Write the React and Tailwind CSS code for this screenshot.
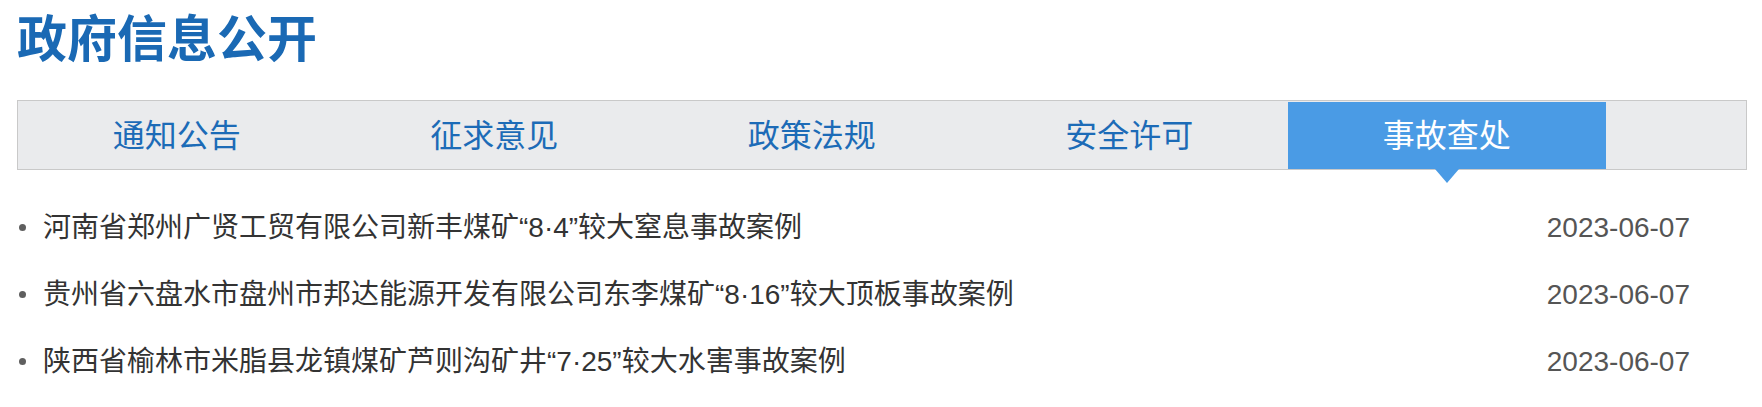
import React, { useState } from "react";

const tabs = ["通知公告", "征求意见", "政策法规", "安全许可", "事故查处"];

const items = [
  { title: "河南省郑州广贤工贸有限公司新丰煤矿“8·4”较大窒息事故案例", date: "2023-06-07" },
  { title: "贵州省六盘水市盘州市邦达能源开发有限公司东李煤矿“8·16”较大顶板事故案例", date: "2023-06-07" },
  { title: "陕西省榆林市米脂县龙镇煤矿芦则沟矿井“7·25”较大水害事故案例", date: "2023-06-07" },
];

const App = () => {
  const [active, setActive] = useState(4);

  return (
    <div
      className="w-full bg-white pl-[17px] pr-[15px] pt-[15px]"
      style={{ fontFamily: '"Liberation Sans", "Noto Sans CJK SC", sans-serif' }}
    >
      <h1 className="h-[50px] text-[50px] leading-[50px] font-bold text-[#1a69b4]">政府信息公开</h1>

      <div className="mt-[35px] h-[70px] border border-[#c9c9c9] bg-[#eaebed] pt-px">
        <div className="flex h-full">
          {tabs.map((t, i) => (
            <div
              key={t}
              onClick={() => setActive(i)}
              className={
                i === active
                  ? "relative flex w-[317.5px] cursor-pointer items-center justify-center bg-[#4a9be5] text-[32px] text-white"
                  : "flex w-[317.5px] cursor-pointer items-center justify-center text-[32px] text-[#1c6bb7]"
              }
            >
              {t}
              {i === active && (
                <span className="absolute left-1/2 top-full -ml-[12px] h-0 w-0 border-x-[12px] border-t-[14px] border-x-transparent border-t-[#4a9be5]" />
              )}
            </div>
          ))}
        </div>
      </div>

      <ul className="pt-[24px] pr-[57px]">
        {items.map((it, i) => (
          <li key={i} className="flex h-[67px] items-center justify-between">
            <div className="flex items-center">
              <span className="ml-[2px] mr-[17px] h-[7px] w-[7px] rounded-full bg-[#5f5f5f]" />
              <span className="text-[28px] text-[#333]">{it.title}</span>
            </div>
            <span className="text-[28px] text-[#555]">{it.date}</span>
          </li>
        ))}
      </ul>
    </div>
  );
};

export default App;
